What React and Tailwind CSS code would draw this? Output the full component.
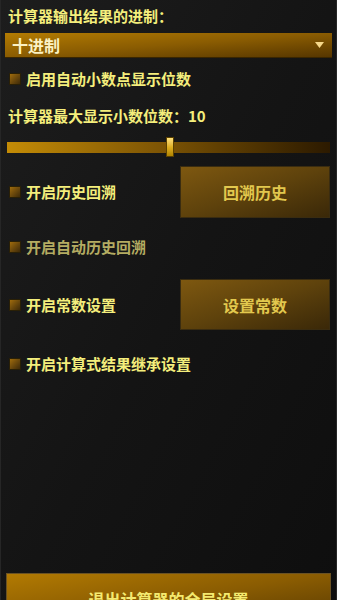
import React from "react";

const font = { fontFamily: '"Noto Sans CJK SC", "Noto Sans", sans-serif' };

function Check({ label, dim = false }) {
  return (
    <div className="flex items-center h-[22px] pl-[8px]">
      <span className="w-[12px] h-[12px] border border-[#2a2006] bg-gradient-to-br from-[#a06c0c] to-[#3e2a08]" />
      <span className={`ml-[5px] text-[15px] font-bold leading-[22px] ${dim ? "text-[#b4ac62]" : "text-[#f4ee7c]"}`}>
        {label}
      </span>
    </div>
  );
}

function ActionButton({ label }) {
  return (
    <button className="w-[150px] h-full border border-[#3a2c10] bg-gradient-to-br from-[#7e5810] via-[#5e420c] to-[#3a2808] text-[16px] font-bold text-[#e2c84e]">
      {label}
    </button>
  );
}

export default function App() {
  return (
    <div
      style={font}
      className="w-[337px] h-[625px] flex flex-col bg-gradient-to-br from-[#1d1d1d] via-[#141414] to-[#0e0e0e] border-x border-[#262626]"
    >
      <div className="pt-[6px] pl-[7px] h-[26px] text-[15px] font-bold leading-[20px] text-[#f4ee7c]">
        计算器输出结果的进制：
      </div>

      {/* dropdown */}
      <div className="mt-[7px] mx-[4px] h-[25px] flex items-center justify-between px-[7px] bg-gradient-to-br from-[#b47c02] via-[#8a5c02] to-[#563600] border-b border-[#3a2600]">
        <span className="text-[16px] font-bold text-[#fbf2c4] leading-none">十进制</span>
        <svg width="9" height="6" viewBox="0 0 9 6" className="mr-[1px]">
          <polygon points="0,0 9,0 4.5,6" fill="#f6d88a" />
        </svg>
      </div>

      <div className="mt-[10px]">
        <Check label="启用自动小数点显示位数" />
      </div>

      <div className="mt-[16px] pl-[7px] h-[20px] text-[15px] font-bold leading-[20px] text-[#f4ee7c]">
        计算器最大显示小数位数：10
      </div>

      {/* slider */}
      <div className="mt-[10px] mx-[6px] h-[22px] flex items-center relative">
        <div className="w-full h-[11px] bg-gradient-to-r from-[#c48c06] via-[#7a5204] to-[#2c1a00]" />
        <div className="absolute left-[159px] top-[1px] w-[8px] h-[20px] border border-[#5a4000] bg-gradient-to-b from-[#ffe27a] via-[#e0b020] to-[#b08400]" />
      </div>

      <div className="mt-[8px] h-[52px] flex items-center justify-between pr-[6px]">
        <Check label="开启历史回溯" />
        <ActionButton label="回溯历史" />
      </div>

      <div className="mt-[18px]">
        <Check label="开启自动历史回溯" dim />
      </div>

      <div className="mt-[21px] h-[51px] flex items-center justify-between pr-[6px]">
        <Check label="开启常数设置" />
        <ActionButton label="设置常数" />
      </div>

      <div className="mt-[23px]">
        <Check label="开启计算式结果继承设置" />
      </div>

      <button className="mt-auto mx-[5px] h-[52px] shrink-0 border border-[#6a5224] bg-gradient-to-br from-[#b27a02] via-[#8a5c02] to-[#583a02] text-[16px] font-bold text-[#f4ea70]">
        退出计算器的全局设置
      </button>
    </div>
  );
}
